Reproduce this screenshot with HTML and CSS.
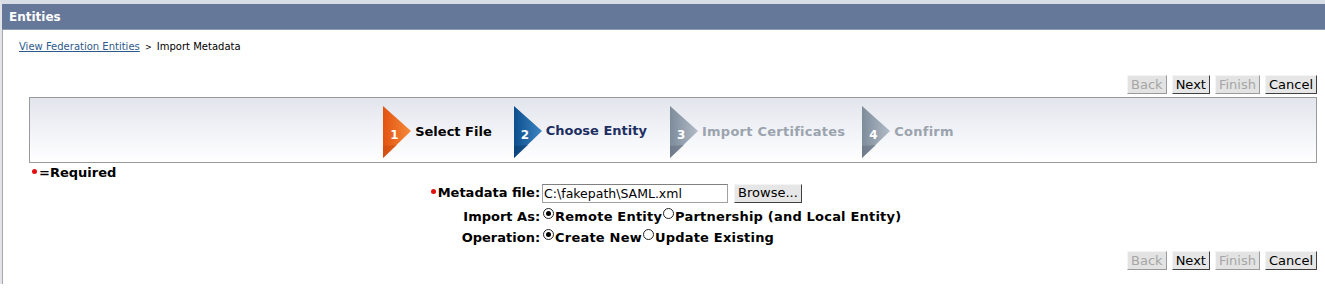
FILE: index.html
```html
<!DOCTYPE html>
<html lang="en">
<head>
  <meta charset="UTF-8">
  <title>Entities - Import Metadata</title>
  <link rel="stylesheet" href="styles.css">
</head>
<body>
  <div class="page">
    <div class="header">Entities</div>
    <div class="content">
      <div class="crumbs">
        <a href="#">View Federation Entities</a> <span class="sep">&gt;</span> Import Metadata
      </div>

      <div class="btnbar">
        <button class="btn" disabled>Back</button>
        <button class="btn">Next</button>
        <button class="btn" disabled>Finish</button>
        <button class="btn">Cancel</button>
      </div>

      <div class="wizard">
        <div class="step done">
          <svg class="arrow" width="28" height="52" viewBox="0 0 28 52">
            <defs>
              <linearGradient id="g1" x1="0" y1="0" x2="1" y2="0">
                <stop offset="0" stop-color="#e2540f"/>
                <stop offset="1" stop-color="#f58a3c"/>
              </linearGradient>
            </defs>
            <polygon points="0,0 28,25 0,52" fill="url(#g1)"/>
            <polygon points="0,40 14,39 0,52" fill="#c84a10" opacity="0.5"/>
          </svg>
          <span class="num">1</span>
          <span class="label">Select File</span>
        </div>
        <div class="step current">
          <svg class="arrow" width="28" height="52" viewBox="0 0 28 52">
            <defs>
              <linearGradient id="g2" x1="0" y1="0" x2="1" y2="0">
                <stop offset="0" stop-color="#0d4e8c"/>
                <stop offset="1" stop-color="#3d86c4"/>
              </linearGradient>
            </defs>
            <polygon points="0,0 28,25 0,52" fill="url(#g2)"/>
            <polygon points="0,40 14,39 0,52" fill="#083a6c" opacity="0.5"/>
          </svg>
          <span class="num">2</span>
          <span class="label">Choose Entity</span>
        </div>
        <div class="step todo">
          <svg class="arrow" width="28" height="52" viewBox="0 0 28 52">
            <defs>
              <linearGradient id="g3" x1="0" y1="0" x2="1" y2="0">
                <stop offset="0" stop-color="#7d8b9b"/>
                <stop offset="1" stop-color="#b2bcc7"/>
              </linearGradient>
            </defs>
            <polygon points="0,0 28,25 0,52" fill="url(#g3)"/>
            <polygon points="0,40 14,39 0,52" fill="#5f6c7a" opacity="0.5"/>
          </svg>
          <span class="num">3</span>
          <span class="label">Import Certificates</span>
        </div>
        <div class="step todo last">
          <svg class="arrow" width="28" height="52" viewBox="0 0 28 52">
            <polygon points="0,0 28,25 0,52" fill="url(#g3)"/>
            <polygon points="0,40 14,39 0,52" fill="#5f6c7a" opacity="0.5"/>
          </svg>
          <span class="num">4</span>
          <span class="label">Confirm</span>
        </div>
      </div>

      <div class="required"><span class="dot"></span>=Required</div>

      <table class="form">
        <tr class="first">
          <td class="lbl"><span class="dot"></span>Metadata file:</td>
          <td class="fld">
            <span class="file">C:\fakepath\SAML.xml</span><button class="btn browse">Browse...</button>
          </td>
        </tr>
        <tr>
          <td class="lbl">Import As:</td>
          <td class="fld opts">
            <span class="radio on"></span>Remote Entity<span class="radio"></span>Partnership (and Local Entity)
          </td>
        </tr>
        <tr>
          <td class="lbl">Operation:</td>
          <td class="fld opts">
            <span class="radio on"></span>Create New<span class="radio"></span>Update Existing
          </td>
        </tr>
      </table>

      <div class="btnbar bottom">
        <button class="btn" disabled>Back</button>
        <button class="btn">Next</button>
        <button class="btn" disabled>Finish</button>
        <button class="btn">Cancel</button>
      </div>
    </div>
  </div>
</body>
</html>
```

FILE: styles.css
```css
body {
  margin: 0;
  font-family: "DejaVu Sans", Verdana, sans-serif;
  background-color: #fff;
  color: #000;
}
.page {
  border-top: 4px solid #d9dde6;
  border-left: 2px solid #e2e4ea;
  height: 284px;
  box-sizing: border-box;
}
.header {
  background-color: #66789a;
  border-bottom: 1px solid #8c9ab2;
  color: #fff;
  font-weight: bold;
  font-size: 12px;
  height: 25px;
  line-height: 26px;
  padding-left: 7px;
}
.content {
  border-left: 1px solid #a8a8a8;
  height: 254px;
  padding: 0 8px 0 26px;
}
.crumbs {
  font-size: 10px;
  padding: 11px 0 0 0;
  margin-left: -10px;
  height: 20px;
}
.crumbs a {
  color: #2d5a8a;
  text-decoration: underline;
}
.crumbs .sep {
  font-size: 8px;
  padding: 0 2px;
}
.btnbar {
  display: flex;
  justify-content: flex-end;
  gap: 5px;
  margin-top: 14px;
}
.btn {
  font-family: "DejaVu Sans", Verdana, sans-serif;
  font-size: 13px;
  height: 19px;
  padding: 0 3px;
  background-color: #e6e6e6;
  border: 1px solid;
  border-color: #f4f4f4 #404040 #404040 #f4f4f4;
  color: #000;
  line-height: 16px;
}
.btn:disabled {
  color: #a6a6a6;
  background-color: #e3e3e3;
  border-color: #f4f4f4 #9a9a9a #9a9a9a #f4f4f4;
}
.wizard {
  margin-top: 3px;
  height: 64px;
  border: 1px solid #9a9a9a;
  background: linear-gradient(#e2e5ec, #f4f5f9 60%, #fff);
  display: flex;
  justify-content: center;
  align-items: center;
  padding-right: 9px;
}
.step {
  display: flex;
  align-items: center;
  position: relative;
  font-size: 13px;
  font-weight: bold;
}
.step.done {
  margin-right: 22px;
}
.step.current {
  margin-right: 23px;
}
.step.todo {
  margin-right: 17px;
}
.step.last {
  margin-right: 0;
}
.step .arrow {
  display: block;
  margin-top: 4px;
}
.step .num {
  position: absolute;
  left: 7px;
  top: 26px;
  color: #fff;
  font-size: 12px;
}
.step .label {
  margin-left: 4px;
  margin-top: 3px;
}
.step.current .label {
  color: #1d2f62;
  margin-top: 0;
}
.step.todo .label {
  color: #9ba4ae;
  letter-spacing: 0.25px;
}
.dot {
  display: inline-block;
  width: 5px;
  height: 5px;
  border-radius: 50%;
  background-color: #e01010;
  margin-right: 2px;
  vertical-align: 3px;
}
.required {
  font-size: 13px;
  font-weight: bold;
  margin: 2px 0 0 3px;
}
.form {
  margin: 0 auto 0;
  border-collapse: collapse;
  font-size: 13px;
  font-weight: bold;
  position: relative;
  left: -7px;
}
.form td {
  padding: 0;
  height: 21px;
  line-height: 16px;
}
.form tr.first td {
  height: 26px;
}
.form .lbl {
  text-align: right;
  padding-right: 2px;
}
.file {
  display: inline-block;
  width: 183px;
  height: 17px;
  border: 1px solid #a0a0a0;
  border-top-color: #808080;
  font-weight: normal;
  font-size: 12.5px;
  line-height: 17px;
  padding-left: 1px;
  vertical-align: middle;
}
.browse {
  margin-left: 6px;
  vertical-align: middle;
}
.opts {
  white-space: nowrap;
  letter-spacing: 0.2px;
}
.radio {
  display: inline-block;
  width: 11px;
  height: 11px;
  border: 1px solid #222;
  border-radius: 50%;
  box-sizing: border-box;
  vertical-align: 2px;
  position: relative;
  background-color: #fff;
  margin: 0 1px;
}
.radio.on::after {
  content: "";
  position: absolute;
  left: 2px;
  top: 2px;
  width: 5px;
  height: 5px;
  border-radius: 50%;
  background-color: #000;
}
.btnbar.bottom {
  margin-top: 3px;
}
```
